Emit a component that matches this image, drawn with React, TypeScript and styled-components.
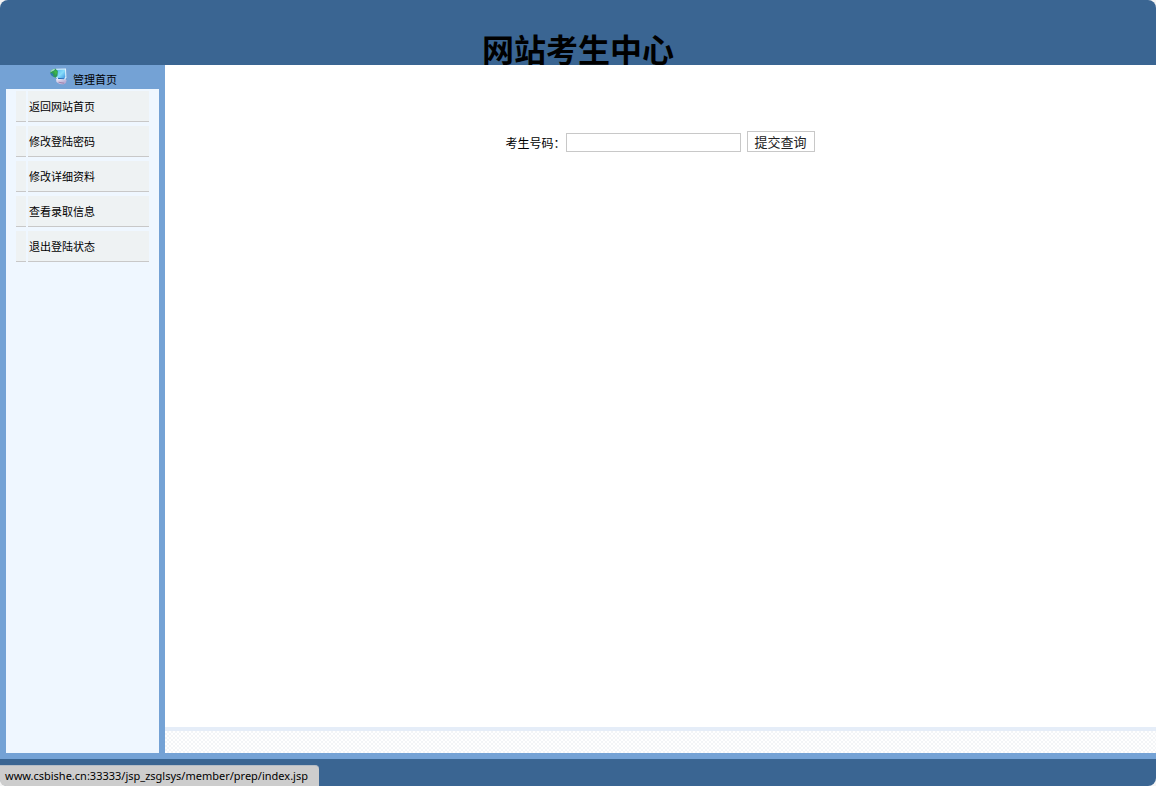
import React from "react";
import styled, { createGlobalStyle } from "styled-components";

const GlobalStyle = createGlobalStyle`
  * { box-sizing: border-box; }
  body {
    margin: 0;
    background: #f4f4f4;
    color: #000;
    font-family: "Noto Sans CJK SC", sans-serif;
    font-size: 12px;
  }
`;

const Page = styled.div`
  display: flex;
  flex-direction: column;
  min-height: 100vh;
  border-radius: 8px;
  overflow: hidden;
  background: #3a6592;
`;

const Header = styled.header`
  height: 65px;
  padding-top: 32px;
  overflow: hidden;
  text-align: center;
`;

const Title = styled.h1`
  margin: 0;
  font-size: 32px;
  line-height: 32px;
  font-weight: 700;
`;

const Body = styled.div`
  flex: 1;
  display: flex;
  border-bottom: 6px solid #74a2d5;
`;

const Sidebar = styled.aside`
  flex: none;
  width: 165px;
  display: flex;
  flex-direction: column;
  padding: 0 6px;
  background: #74a2d5;
`;

const SideHeading = styled.a`
  display: flex;
  justify-content: center;
  gap: 6px;
  height: 24px;
  padding: 3px 0 0 2px;
  color: #000;
  font-size: 11px;
  line-height: 22px;
  text-decoration: none;
`;

const Menu = styled.nav`
  flex: 1;
  display: flex;
  flex-direction: column;
  gap: 4px;
  padding: 2px 10px;
  background: #eff7ff;
`;

const MenuRow = styled.div`
  display: flex;
  gap: 2px;
  height: 31px;

  &::before {
    content: "";
    width: 10px;
    background: #eef2f3;
    border-bottom: 1px solid #c8c8c8;
  }
`;

const MenuLink = styled.a`
  flex: 1;
  padding-left: 1px;
  background: #eef2f3;
  border-bottom: 1px solid #c8c8c8;
  color: #000;
  font-size: 11px;
  line-height: 30px;
  text-decoration: none;
`;

const Main = styled.main`
  flex: 1;
  display: flex;
  flex-direction: column;
  background: #fff;
`;

const Query = styled.form`
  flex: 1;
  display: flex;
  align-items: flex-start;
  justify-content: center;
  padding: 66px 1px 0 0;
`;

const Label = styled.label`
  width: 60px;
  line-height: 24px;
  white-space: nowrap;
`;

const TextBox = styled.input`
  width: 175px;
  height: 19px;
  margin: 2px 6px 0 0;
  padding: 1px 2px;
  border: 1px solid #c8c8c8;
  background: #fff;
  font: inherit;
`;

const Submit = styled.button`
  width: 68px;
  height: 21px;
  padding: 0;
  border: 1px solid #c8c8c8;
  background: #fff;
  color: #222;
  font-family: inherit;
  font-size: 13px;
  line-height: 19px;
`;

const Strip = styled.div`
  height: 26px;
  border-top: 4px solid #e5edf8;
  background: repeating-conic-gradient(#f3f5f7 0% 25%, #fff 0% 50%) 0 0 / 4px 4px;
`;

const Footer = styled.footer`
  height: 27px;
`;

const Status = styled.div`
  position: fixed;
  left: 0;
  bottom: 0;
  height: 21px;
  padding: 0 11px 0 5px;
  border-top: 1px solid #b4bcc5;
  border-radius: 0 4px 0 6px;
  background: #cdcdcd;
  font-family: "Noto Sans", sans-serif;
  font-size: 11px;
  line-height: 20px;
`;

const links = ["返回网站首页", "修改登陆密码", "修改详细资料", "查看录取信息", "退出登陆状态"];

const NetworkIcon = () => (
  <svg width="17" height="17" viewBox="0 0 17 17" aria-hidden="true">
    <defs>
      <linearGradient id="screen" x1="0" y1="0" x2="1" y2="1">
        <stop offset="0" stopColor="#58b8ee" />
        <stop offset="0.5" stopColor="#86dcfa" />
        <stop offset="1" stopColor="#3a93e0" />
      </linearGradient>
      <linearGradient id="base" x1="0" y1="0" x2="1" y2="1">
        <stop offset="0" stopColor="#f4eefa" />
        <stop offset="1" stopColor="#9f94c6" />
      </linearGradient>
    </defs>
    <path d="M6 11 15 10.5 16.5 12.5 16 15 13.5 16.5 9.5 16 6.5 14Z" fill="url(#base)" />
    <path d="M8.5 14.2 14 15.2" stroke="#a084ad" strokeWidth="1" />
    <path d="M6 .8 16 .5 16.4 9.5 15 11.8 7.5 11.3 5.5 9Z" fill="#e2f2fc" />
    <path d="M6.5 1.8 15 1.6 15.3 9 14.2 10.6 8 10.2 6.5 8.5Z" fill="url(#screen)" />
    <path d="M8 10.4 14.4 10.8" stroke="#2767b8" strokeWidth="1" />
    <path d="M.3 4.5C.6 2 3 .5 5.5 .8L7.8 3 7.5 7.5 6 9.8C3 9 .5 7.3 .3 4.5Z" fill="#2f9a58" />
    <path d="M.3 4.5C.6 2 3 .5 5.5 .8L4 2.6 1.8 3.5Z" fill="#9fdcc0" />
    <path d="M.5 5 2.5 5.5 4 8.8C2 8 .7 6.7 .5 5Z" fill="#2d74c4" />
    <path d="M3.8 3 6.5 2.5 7.2 5 5.5 7Z" fill="#3fb648" />
  </svg>
);

export default function App() {
  return (
    <>
      <GlobalStyle />
      <Page>
        <Header>
          <Title>网站考生中心</Title>
        </Header>
        <Body>
          <Sidebar>
            <SideHeading href="#home">
              <NetworkIcon />
              管理首页
            </SideHeading>
            <Menu>
              {links.map((text) => (
                <MenuRow key={text}>
                  <MenuLink href="#">{text}</MenuLink>
                </MenuRow>
              ))}
            </Menu>
          </Sidebar>
          <Main>
            <Query onSubmit={(e) => e.preventDefault()}>
              <Label htmlFor="number">考生号码：</Label>
              <TextBox id="number" type="text" />
              <Submit type="submit">提交查询</Submit>
            </Query>
            <Strip />
          </Main>
        </Body>
        <Footer />
      </Page>
      <Status>www.csbishe.cn:33333/jsp_zsglsys/member/prep/index.jsp</Status>
    </>
  );
}
